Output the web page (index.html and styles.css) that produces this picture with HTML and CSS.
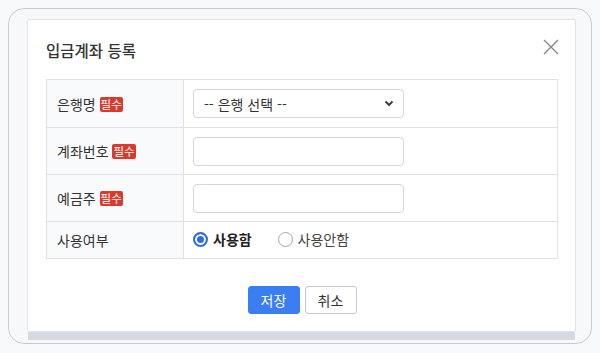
FILE: index.html
```html
<!DOCTYPE html>
<html lang="ko">
<head>
<meta charset="utf-8">
<link rel="stylesheet" href="styles.css">
</head>
<body>
<div class="frame">
  <div class="modal">
    <div class="modal-head">
      <h2 class="title">입금계좌 등록</h2>
      <button class="close" type="button" aria-label="닫기">
        <svg width="16" height="16" viewBox="0 0 16 16"><path d="M1 1L15 15M15 1L1 15" stroke="#86868b" stroke-width="1.4" fill="none"/></svg>
      </button>
    </div>
    <table class="form">
      <tr class="first">
        <th>은행명 <span class="req">필수</span></th>
        <td>
          <div class="select">
            <span>-- 은행 선택 --</span>
            <svg width="10" height="7" viewBox="0 0 10 7"><path d="M1.5 1.5L5 5L8.5 1.5" stroke="#333" stroke-width="1.8" fill="none"/></svg>
          </div>
        </td>
      </tr>
      <tr>
        <th>계좌번호 <span class="req">필수</span></th>
        <td><div class="input"></div></td>
      </tr>
      <tr>
        <th>예금주 <span class="req">필수</span></th>
        <td><div class="input"></div></td>
      </tr>
      <tr class="short">
        <th>사용여부</th>
        <td class="radios">
          <label class="radio on"><span class="dot"></span><span class="rtext">사용함</span></label>
          <label class="radio"><span class="dot"></span><span class="rtext">사용안함</span></label>
        </td>
      </tr>
    </table>
    <div class="actions">
      <button class="btn primary" type="button">저장</button>
      <button class="btn" type="button">취소</button>
    </div>
  </div>
</div>
</body>
</html>
```
FILE: styles.css
```css
* { box-sizing: border-box; }
html, body { margin: 0; padding: 0; }
body {
  background: #f8f9fb;
  font-family: "Noto Sans CJK KR", "Noto Sans", sans-serif;
  color: #333;
  width: 600px;
  height: 353px;
  overflow: hidden;
  padding: 8px 8px 0 8px;
}
.frame {
  width: 584px;
  height: 336px;
  border: 1px solid #c9cacf;
  border-radius: 16px;
  background: #f7f8fa;
  padding: 10px 16px 0 18px;
}
.modal {
  width: 549px;
  height: 313px;
  background: #fff;
  border: 1px solid #e1e2e7;
  box-shadow: 0 9px 0 -1px #d6d9e1;
  border-radius: 2px;
  padding: 0 17px 0 18px;
}
.modal-head {
  height: 59px;
  display: flex;
  align-items: center;
  justify-content: space-between;
}
.title {
  margin: 0;
  font-size: 15.5px;
  font-weight: 500;
  color: #333;
  line-height: 20px;
}
.close {
  border: 0;
  background: none;
  padding: 0;
  width: 16px;
  height: 16px;
  margin-right: -1px;
  margin-top: -6px;
  display: flex;
}
.form {
  width: 512px;
  border-collapse: collapse;
  font-size: 14px;
}
.form th, .form td {
  border: 1px solid #dfe1e6;
  vertical-align: middle;
  height: 47px;
}
.form tr.first th, .form tr.first td {
  height: 48px;
}
.form th {
  width: 137px;
  background: #f9fafc;
  text-align: left;
  font-weight: 400;
  padding: 0 10px;
  color: #333;
  line-height: 20px;
}
.form td {
  padding: 0 9px;
}
.form tr.short th, .form tr.short td {
  height: 37px;
}
.req {
  display: inline-block;
  background: #d83a2e;
  color: #fff;
  font-size: 11.5px;
  line-height: 15px;
  height: 15px;
  padding: 0 1px;
  border-radius: 2px;
  vertical-align: 1px;
}
.select, .input {
  width: 211px;
  height: 29px;
  border: 1px solid #d3d6dc;
  border-radius: 4px;
  background: #fff;
}
.select {
  display: flex;
  align-items: center;
  justify-content: space-between;
  padding: 0 9px 0 10px;
  font-size: 14px;
  color: #333;
}
.radios {
  font-size: 14px;
}
.radio {
  display: inline-flex;
  align-items: center;
  margin-right: 22px;
  color: #444;
}
.dot {
  width: 15px;
  height: 15px;
  border: 1px solid #a3a5ab;
  border-radius: 50%;
  margin-right: 5px;
  background: #fff;
}
.radio.on .dot {
  border: 2px solid #2e6be6;
  box-shadow: inset 0 0 0 2px #fff;
  background: #2e6be6;
}
.radio.on .rtext {
  font-weight: 700;
  color: #222;
}
.actions {
  display: flex;
  justify-content: center;
  gap: 5px;
  padding-top: 27px;
}
.btn {
  width: 52px;
  height: 28px;
  border: 1px solid #c6c9d0;
  border-radius: 3px;
  background: #fff;
  color: #333;
  font-family: inherit;
  font-size: 14px;
  padding: 0;
}
.btn.primary {
  background: #3b7df2;
  border-color: #3b7df2;
  color: #fff;
}
```
